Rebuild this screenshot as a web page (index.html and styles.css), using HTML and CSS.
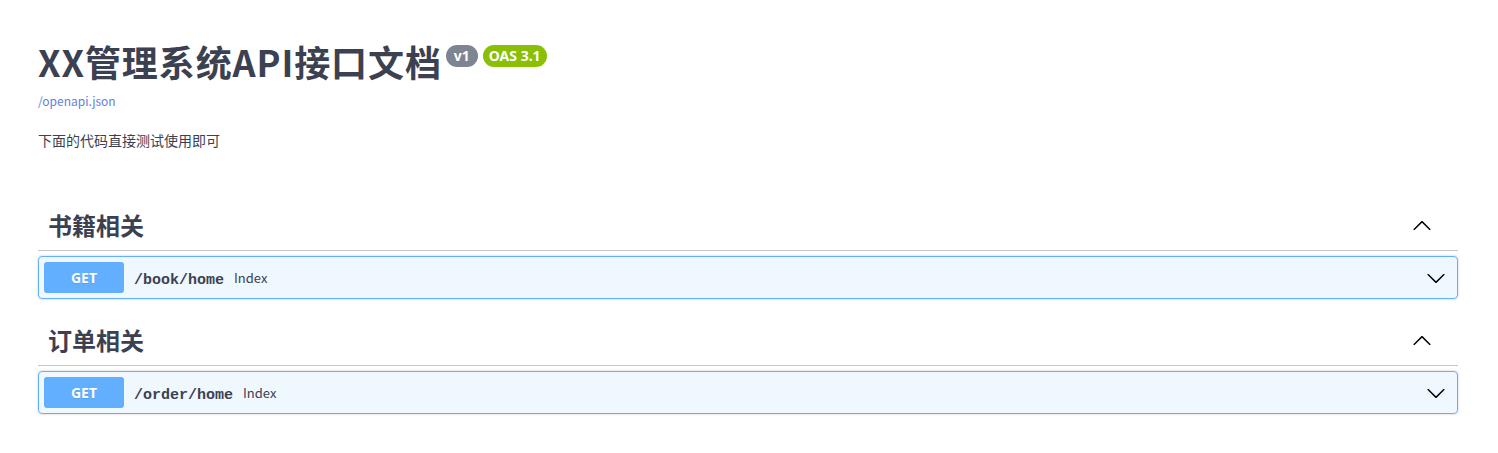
FILE: index.html
```html
<!DOCTYPE html>
<html lang="zh-CN">
<head>
<meta charset="utf-8">
<title>XX管理系统API接口文档</title>
<link rel="stylesheet" href="styles.css">
</head>
<body>
<div class="wrapper">
  <section class="info">
    <h2 class="title">
      <span class="title-text">XX管理系统API接口文档</span>
      <small class="badge badge-version">v1</small>
      <small class="badge badge-oas">OAS 3.1</small>
    </h2>
    <a class="spec-link" href="#">/openapi.json</a>
    <p class="description">下面的代码直接测试使用即可</p>
  </section>

  <section class="tag-section">
    <h3 class="tag">
      <span class="tag-name">书籍相关</span>
      <span class="tag-fill"></span>
      <button class="expand" type="button" aria-label="collapse">
        <svg width="20" height="20" viewBox="0 0 20 20"><path d="M17.418 14.908c.272.268.709.268.979 0s.271-.701 0-.969l-7.908-7.83c-.27-.268-.707-.268-.979 0l-7.908 7.83c-.27.268-.27.701 0 .969.271.268.709.268.979 0L10 7.771l7.418 7.137z"/></svg>
      </button>
    </h3>
    <div class="opblock">
      <div class="summary">
        <span class="method">GET</span>
        <span class="path">/book/home</span>
        <span class="desc">Index</span>
        <span class="tag-fill"></span>
        <button class="expand" type="button" aria-label="expand">
          <svg width="20" height="20" viewBox="0 0 20 20"><path d="M17.418 6.109c.272-.268.709-.268.979 0s.271.701 0 .969l-7.908 7.83c-.27.268-.707.268-.979 0l-7.908-7.83c-.27-.268-.27-.701 0-.969.271-.268.709-.268.979 0L10 13.25l7.418-7.141z"/></svg>
        </button>
      </div>
    </div>
  </section>

  <section class="tag-section">
    <h3 class="tag">
      <span class="tag-name">订单相关</span>
      <span class="tag-fill"></span>
      <button class="expand" type="button" aria-label="collapse">
        <svg width="20" height="20" viewBox="0 0 20 20"><path d="M17.418 14.908c.272.268.709.268.979 0s.271-.701 0-.969l-7.908-7.83c-.27-.268-.707-.268-.979 0l-7.908 7.83c-.27.268-.27.701 0 .969.271.268.709.268.979 0L10 7.771l7.418 7.137z"/></svg>
      </button>
    </h3>
    <div class="opblock">
      <div class="summary">
        <span class="method">GET</span>
        <span class="path">/order/home</span>
        <span class="desc">Index</span>
        <span class="tag-fill"></span>
        <button class="expand" type="button" aria-label="expand">
          <svg width="20" height="20" viewBox="0 0 20 20"><path d="M17.418 6.109c.272-.268.709-.268.979 0s.271.701 0 .969l-7.908 7.83c-.27.268-.707.268-.979 0l-7.908-7.83c-.27-.268-.27-.701 0-.969.271-.268.709-.268.979 0L10 13.25l7.418-7.141z"/></svg>
        </button>
      </div>
    </div>
  </section>
</div>
</body>
</html>
```

FILE: styles.css
```css
html, body {
  margin: 0;
  padding: 0;
  background: #fff;
}

body {
  font-family: "Noto Sans CJK SC", "Noto Sans", sans-serif;
  color: #3b4151;
}

.wrapper {
  padding: 0 40px 0 38px;
}

.info {
  padding-top: 38px;
  margin-bottom: 49px;
}

.title {
  display: flex;
  align-items: flex-start;
  margin: 0;
  font-size: 36px;
  line-height: 46px;
  font-weight: 700;
  letter-spacing: 0.9px;
  color: #3b4151;
}

.badge {
  display: inline-block;
  margin-top: 7px;
  margin-left: 4px;
  padding: 2px 7px;
  border-radius: 57px;
  font-size: 14px;
  line-height: 18px;
  font-weight: 700;
  letter-spacing: 0;
  color: #fff;
  font-family: "Noto Sans", "Noto Sans CJK SC", sans-serif;
}

.badge-version {
  background: #7d8492;
  padding: 2px 8px;
}

.badge-oas {
  background: #89bf04;
  padding: 2px 6px;
  margin-left: 5px;
}

.spec-link {
  display: block;
  margin-top: 9px;
  font-size: 12px;
  line-height: 16px;
  color: #5f7fe1;
  text-decoration: none;
}

.description {
  margin: 21px 0 0;
  font-size: 14px;
  line-height: 20px;
}

.tag {
  display: flex;
  align-items: center;
  margin: 0 0 5px;
  padding: 10px 20px 10px 10px;
  border-bottom: 1px solid rgba(59, 65, 81, 0.3);
  font-size: 24px;
  line-height: 31px;
  font-weight: 700;
}

.tag-fill {
  flex: 1;
}

.expand {
  display: flex;
  align-items: center;
  padding: 1px 6px;
  border: none;
  background: none;
  cursor: pointer;
}

.expand svg {
  fill: #000;
}

.opblock {
  margin: 0 0 15px;
  border: 1px solid #61affe;
  border-radius: 4px;
  background: rgba(97, 175, 254, 0.1);
  box-shadow: 0 0 3px rgba(0, 0, 0, 0.19);
}

.summary {
  display: flex;
  align-items: center;
  padding: 5px;
}

.method {
  min-width: 80px;
  padding: 6px 0;
  border-radius: 3px;
  background: #61affe;
  color: #fff;
  font-size: 14px;
  line-height: 19px;
  font-weight: 700;
  text-align: center;
  text-shadow: 0 1px 0 rgba(0, 0, 0, 0.1);
  font-family: "Noto Sans", sans-serif;
}

.path {
  padding: 6px 10px 0;
  font-family: "Liberation Mono", "DejaVu Sans Mono", monospace;
  font-size: 15px;
  font-weight: 700;
  color: #3b4151;
}

.desc {
  font-size: 13px;
  color: #3b4151;
}
```
